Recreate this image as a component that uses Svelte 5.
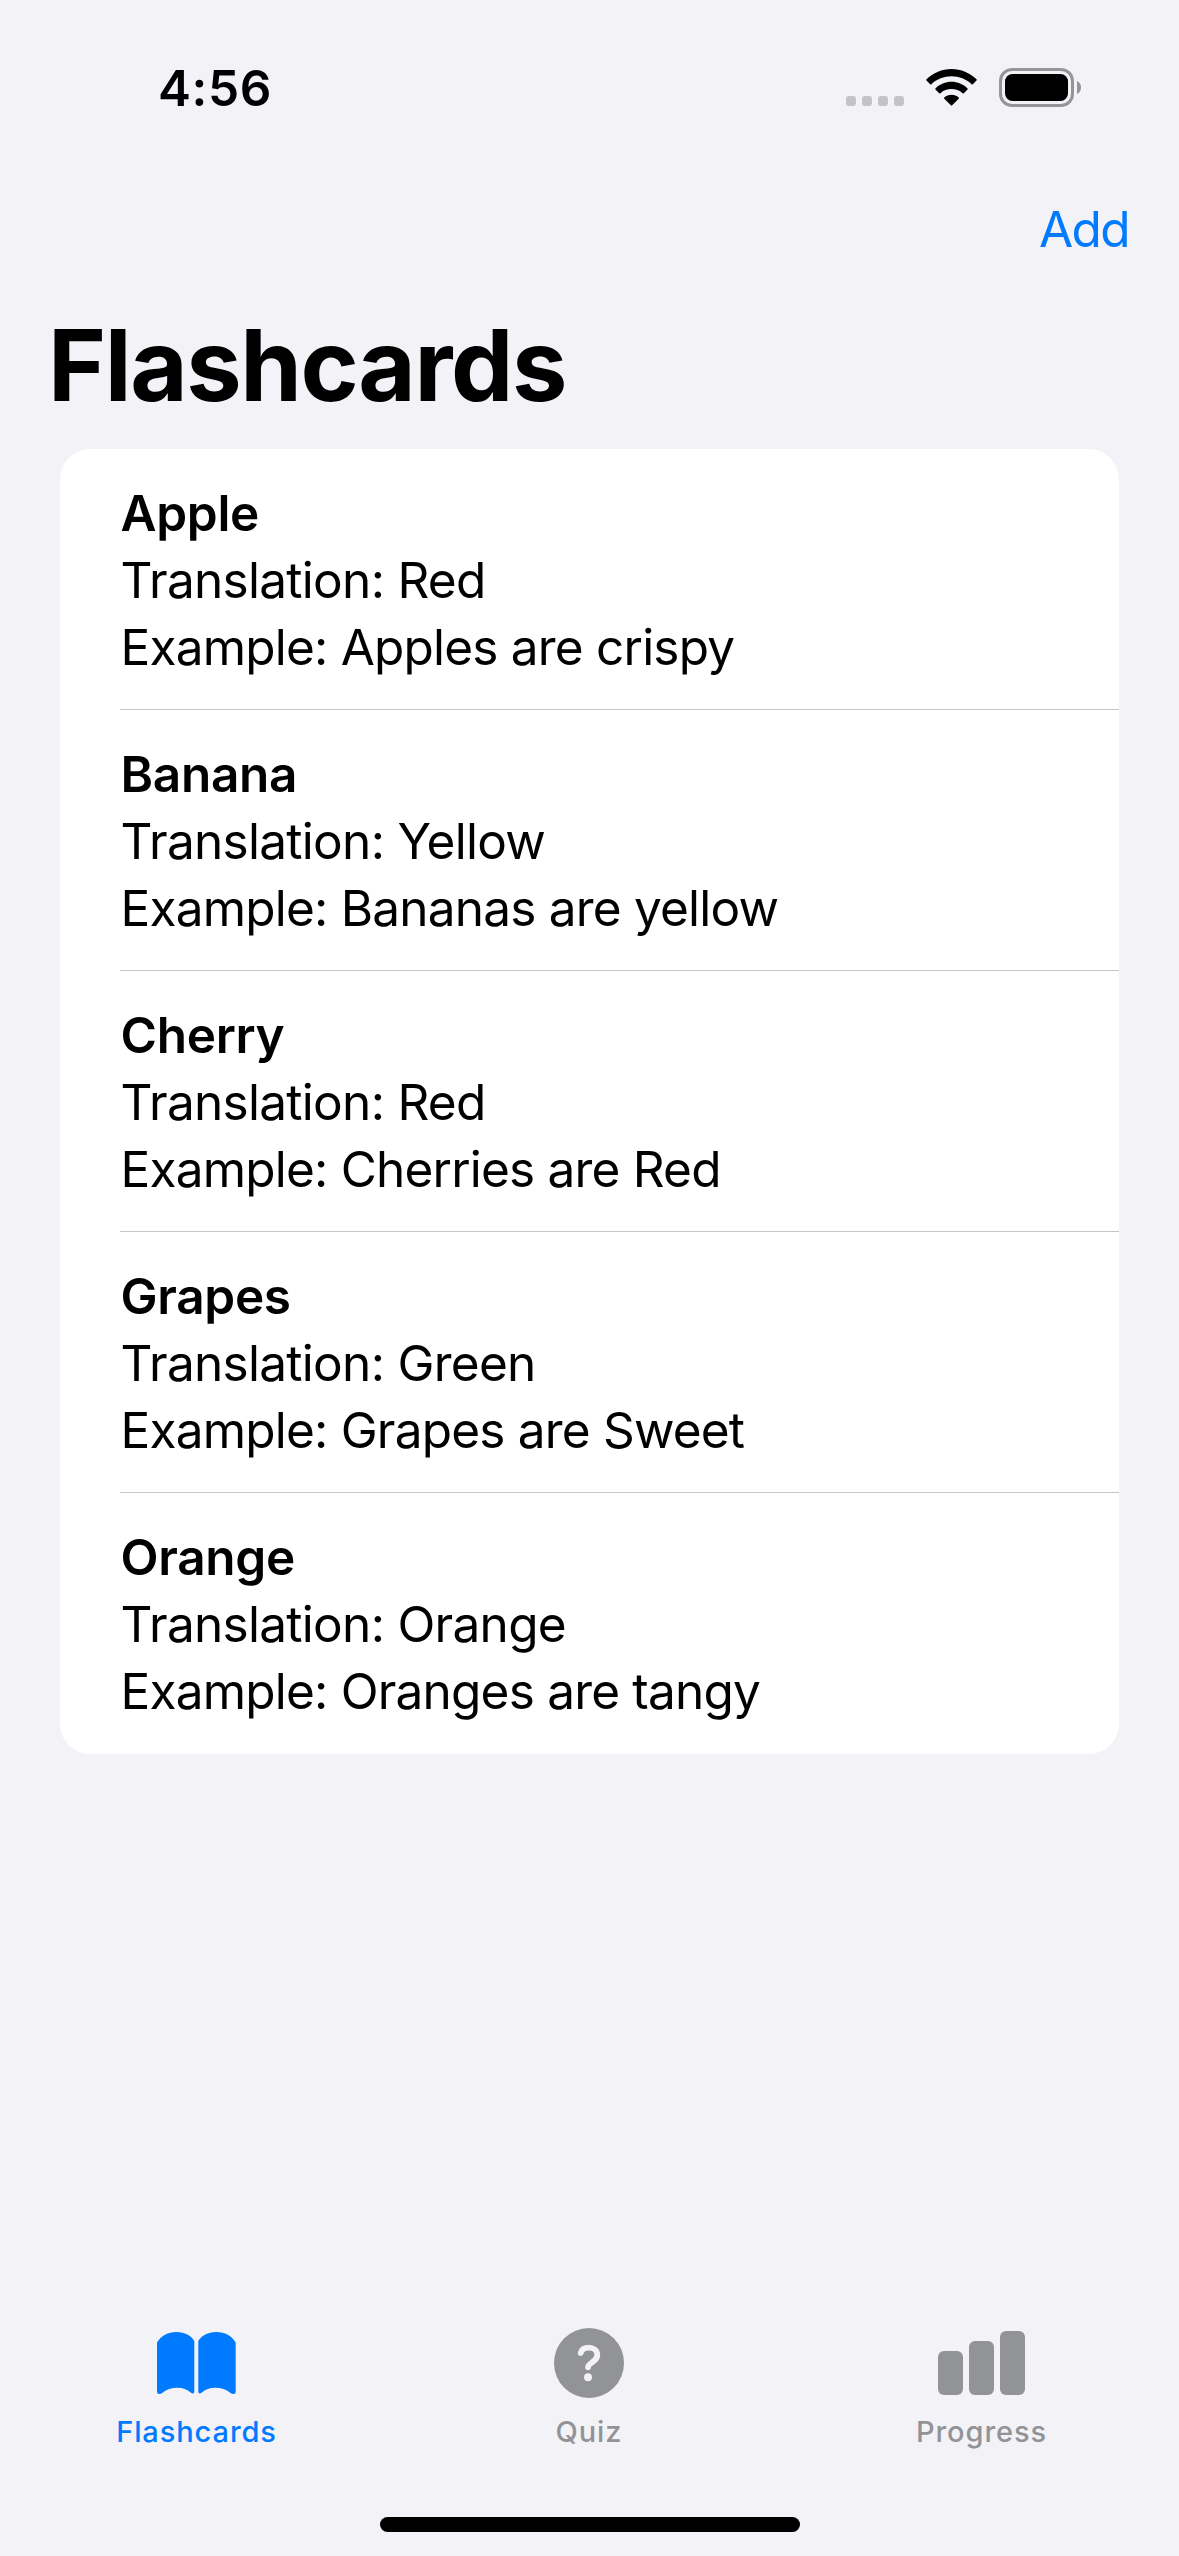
<script>
  const cards = [
    { word: 'Apple', translation: 'Red', example: 'Apples are crispy' },
    { word: 'Banana', translation: 'Yellow', example: 'Bananas are yellow' },
    { word: 'Cherry', translation: 'Red', example: 'Cherries are Red' },
    { word: 'Grapes', translation: 'Green', example: 'Grapes are Sweet' },
    { word: 'Orange', translation: 'Orange', example: 'Oranges are tangy' }
  ];
</script>

<div class="screen">
  <header class="status">
    <span class="time">4:56</span>
    <div class="indicators">
      <svg class="signal" width="58" height="10" viewBox="0 0 58 10">
        <rect x="0" width="10" height="10" rx="3" />
        <rect x="16" width="10" height="10" rx="3" />
        <rect x="32" width="10" height="10" rx="3" />
        <rect x="48" width="10" height="10" rx="3" />
      </svg>
      <svg class="wifi" width="51" height="37" viewBox="0 0 51 37">
        <path d="M.5 10.3C7.2 3.7 16 0 25.5 0S43.800 3.700 50.500 10.300C50.900 10.700 50.900 11.100 50.500 11.500L46.800 15.200C46.400 15.600 46 15.600 45.600 15.200C40.200 10.100 33.200 7.300 25.500 7.300S10.800 10.100 5.400 15.200C5 15.600 4.600 15.600 4.200 15.200L.5 11.500C.1 11.100 .1 10.700 .5 10.300Z" />
        <path d="M9.500 19.400C13.900 15.200 19.500 12.800 25.500 12.800S37.100 15.200 41.500 19.400C41.900 19.800 41.900 20.200 41.500 20.600L37.800 24.300C37.400 24.700 37 24.700 36.600 24.300C33.500 21.500 29.700 20.100 25.500 20.100S17.500 21.500 14.400 24.300C14 24.700 13.600 24.700 13.200 24.300L9.500 20.600C9.100 20.200 9.100 19.800 9.500 19.400Z" />
        <path d="M18.300 28.500C20.300 26.700 22.800 25.700 25.500 25.700S30.700 26.700 32.700 28.500C33.100 28.900 33.100 29.300 32.700 29.700L26.100 36.300C25.700 36.700 25.300 36.700 24.900 36.300L18.300 29.700C17.900 29.300 17.900 28.900 18.300 28.500Z" />
      </svg>
      <svg class="battery" width="82" height="39" viewBox="0 0 82 39">
        <rect class="shell" x="1.5" y="1.5" width="72" height="36" rx="11.500" />
        <rect x="6" y="6" width="63" height="27" rx="7.500" />
        <path class="tip" d="M78 13C80.500 14 82 16.500 82 19.500S80.500 25 78 26Z" />
      </svg>
    </div>
  </header>

  <nav class="toolbar"><button class="add">Add</button></nav>
  <h1>Flashcards</h1>

  <ul class="list">
    {#each cards as card}
      <li>
        <div class="word">{card.word}</div>
        <div class="translation">Translation: {card.translation}</div>
        <div class="example">Example: {card.example}</div>
      </li>
    {/each}
  </ul>

  <nav class="tabs">
    <div class="tab active">
      <svg width="79" height="70" viewBox="0 0 79 70">
        <path d="M0 14.500C4 8 11 4 19.500 4S34 7.500 37.300 13V63.500C37.300 65.700 35.500 66 34 64.700C30 61.500 26 59.700 20.500 59.700C14.500 59.700 9.500 61.500 5.500 64.700C3 66.700 0 66.500 0 63.500Z" />
        <path d="M78.700 14.500C74.700 8 68 4 59.300 4S44.800 7.500 41.300 13V63.500C41.300 65.700 43 66 44.500 64.700C48.500 61.500 52.700 59.700 58.200 59.700C64.200 59.700 69.200 61.500 73.200 64.700C75.700 66.700 78.700 66.500 78.700 63.500Z" />
      </svg>
      <span>Flashcards</span>
    </div>
    <div class="tab">
      <svg width="70" height="70" viewBox="0 0 70 70">
        <circle cx="35" cy="35" r="35" />
        <path class="mark" d="M26.700 25C27.700 21.600 30.500 19.700 34.700 19.700C39.800 19.700 43.300 22.500 43.300 26.800C43.300 30.200 41.500 32.200 38.500 34.200C35.500 36.200 34 37.500 34 39.300" />
        <circle class="dot" cx="34" cy="49.300" r="4" />
      </svg>
      <span>Quiz</span>
    </div>
    <div class="tab">
      <svg width="87" height="70" viewBox="0 0 87 70">
        <rect x="0" y="23" width="25" height="44" rx="6" />
        <rect x="31" y="13" width="25" height="54" rx="6" />
        <rect x="62" y="3" width="25" height="64" rx="6" />
      </svg>
      <span>Progress</span>
    </div>
  </nav>
  <div class="home"></div>
</div>

<style>
  :global(body) { margin: 0; background: #f2f2f7; }
  .screen {
    box-sizing: border-box;
    width: 1179px;
    height: 2556px;
    display: flex;
    flex-direction: column;
    background: #f2f2f7;
    color: #000;
    font-family: Inter, "Liberation Sans", sans-serif;
    font-size: 49.5px;
    overflow: hidden;
  }
  svg { display: block; }
  .status {
    height: 177px;
    box-sizing: border-box;
    padding: 58px 98px 0 158px;
    display: flex;
    justify-content: space-between;
    align-items: flex-start;
  }
  .time { font-weight: 600; line-height: 60px; letter-spacing: 0.6px; }
  .indicators { display: flex; padding-top: 10px; }
  .signal { margin: 28px 22px 0 0; fill: #c4c3c8; }
  .wifi { margin: 1px 22px 0 0; }
  .shell { fill: none; stroke: #959599; stroke-width: 3; }
  .tip { fill: #959599; }
  .toolbar {
    height: 132px;
    box-sizing: border-box;
    padding: 22px 50px 0;
    display: flex;
    justify-content: flex-end;
    align-items: flex-start;
  }
  .add {
    border: 0;
    padding: 0;
    background: none;
    color: #007aff;
    font: 400 49.5px/60px Inter, "Liberation Sans", sans-serif;
    letter-spacing: -1.6px;
  }
  h1 {
    margin: 0;
    height: 140px;
    padding-left: 48px;
    font-size: 99px;
    font-weight: 700;
    line-height: 112px;
    letter-spacing: -1.4px;
  }
  .list {
    list-style: none;
    margin: 0 60px;
    padding: 0;
    background: #fff;
    border-radius: 30px;
  }
  li {
    box-sizing: border-box;
    height: 261px;
    margin-left: 60px;
    padding: 31px 0 0 0.5px;
    line-height: 67px;
    border-bottom: 1px solid #c6c6c8;
  }
  li:last-child { border-bottom: 0; }
  .word { font-weight: 600; letter-spacing: -0.3px; }
  .translation { letter-spacing: -0.7px; }
  .example { letter-spacing: -0.79px; }
  .tabs {
    margin-top: auto;
    display: grid;
    grid-template-columns: 393px 392px 393px;
    height: 189px;
  }
  .tab {
    display: flex;
    flex-direction: column;
    align-items: center;
    gap: 16px;
    color: #929397;
    fill: currentColor;
    font-size: 29px;
    font-weight: 500;
    line-height: 36px;
    letter-spacing: 0.9px;
  }
  .active { color: #007aff; }
  .mark { fill: none; stroke: #f2f2f7; stroke-width: 5.800; stroke-linecap: round; }
  .dot { fill: #f2f2f7; }
  .home {
    width: 420px;
    height: 15px;
    margin: 0 auto 24px;
    border-radius: 8px;
    background: #000;
  }
</style>
